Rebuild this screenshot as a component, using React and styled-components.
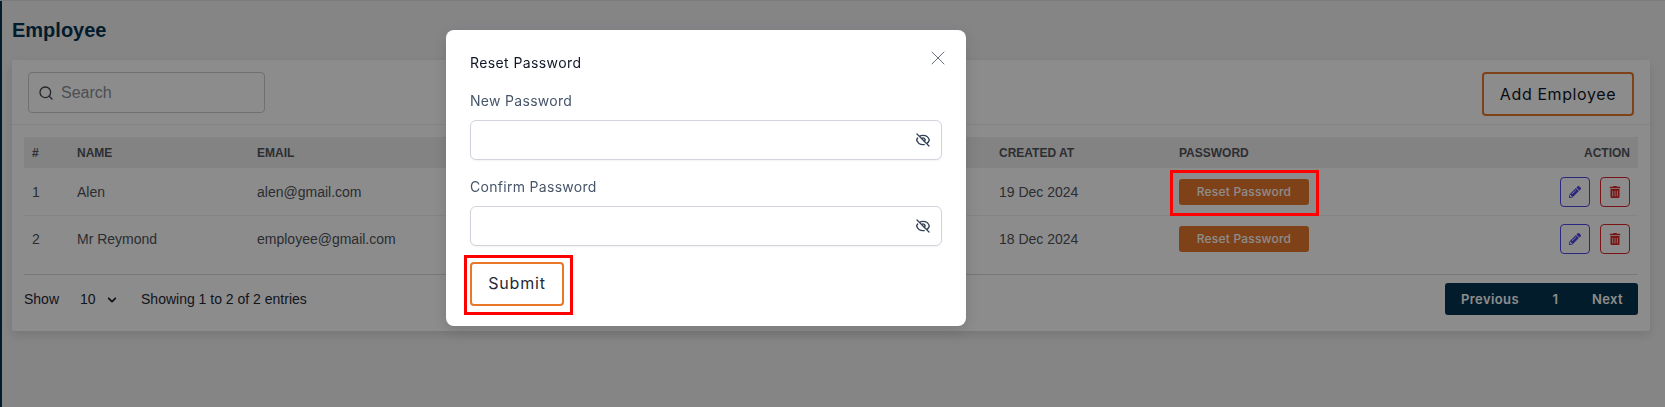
import styled, { createGlobalStyle } from "styled-components";
import { FaPencilAlt, FaTrashAlt, FaChevronDown } from "react-icons/fa";
import { HiOutlineEyeOff } from "react-icons/hi";
import { FiSearch } from "react-icons/fi";
import { X } from "lucide-react";

const NAVY = "#04344f";
const ORANGE = "#e8772a";
const UI_FONT = `Inter, "Noto Sans", sans-serif`;

const GlobalStyle = createGlobalStyle`
    html, body {
        margin: 0;
        height: 100%;
        overflow: hidden;
        background: #f3f3f5;
        font-family: "Liberation Sans", Arial, sans-serif;
    }
    * { box-sizing: border-box; }
`;

const Page = styled.div`
    display: flex;
    height: 407px;
    border-top: 1px solid #dfe0e2;
`;

const SideEdge = styled.div`
    width: 2px;
    background: ${NAVY};
`;

const Main = styled.main`
    flex: 1;
    padding: 19px 15px 0 10px;
`;

const Title = styled.h1`
    margin: 0 0 20px;
    font-size: 20px;
    line-height: 20px;
    font-weight: 700;
    color: ${NAVY};
`;

const Card = styled.section`
    background: #fff;
    box-shadow: 0 4px 12px rgba(0, 0, 0, 0.12);
    border-radius: 2px;
`;

const Toolbar = styled.div`
    display: flex;
    justify-content: space-between;
    align-items: flex-start;
    padding: 12px 16px 8px;
    border-bottom: 1px solid #eeeff1;
`;

const SearchBox = styled.label`
    display: flex;
    align-items: center;
    gap: 5px;
    width: 237px;
    height: 41px;
    padding: 0 9px;
    border: 1px solid #c9ccd1;
    border-radius: 4px;
    color: #3f4650;
`;

const SearchInput = styled.input`
    flex: 1;
    min-width: 0;
    border: 0;
    outline: 0;
    background: transparent;
    font: 16px "Liberation Sans", Arial, sans-serif;
    &::placeholder { color: #8a8f98; }
`;

const AddButton = styled.button`
    width: 152px;
    height: 44px;
    border: 2px solid ${ORANGE};
    border-radius: 4px;
    background: #fff;
    color: #111827;
    font: 400 16px ${UI_FONT};
    letter-spacing: 0.6px;
`;

const TableArea = styled.div`
    padding: 12px 12px 0;
`;

const Row = styled.div`
    display: grid;
    grid-template-columns: 45px 180px 742px 180px 1fr 170px;
    align-items: center;
    height: ${({ $head, $last }) => ($head ? "31px" : $last ? "46px" : "48px")};
    background: ${({ $head }) => ($head ? "#eeeeef" : "transparent")};
    border-bottom: ${({ $last, $head }) => ($last || $head ? "0" : "1px solid #f0f1f3")};
`;

const HeadCell = styled.div`
    padding: 0 8px;
    font-size: 12px;
    font-weight: 700;
    color: #52555c;
    text-align: ${({ $right }) => ($right ? "right" : "left")};
`;

const Cell = styled.div`
    padding: 0 8px;
    font-size: 14px;
    color: #50525a;
`;

const Actions = styled.div`
    display: flex;
    justify-content: flex-end;
    gap: 10px;
    padding-right: 8px;
`;

const IconButton = styled.button`
    display: flex;
    align-items: center;
    justify-content: center;
    width: 30px;
    height: 30px;
    padding: 0;
    border: 1px solid ${({ $color }) => $color};
    border-radius: 4px;
    background: #fff;
    color: ${({ $color }) => $color};
    font-size: 12px;
`;

const Marked = styled.div`
    position: relative;
    width: fit-content;
    &::after {
        content: "";
        position: absolute;
        z-index: 30;
        top: ${({ $top }) => $top}px;
        right: ${({ $right }) => $right}px;
        bottom: ${({ $bottom }) => $bottom}px;
        left: ${({ $left }) => $left}px;
        border: 3px solid #ff0000;
        pointer-events: none;
    }
`;

const ResetButton = styled.button`
    display: block;
    width: 130px;
    height: 26px;
    padding: 0 0 1px;
    border: 0;
    border-radius: 3px;
    background: ${ORANGE};
    color: #fff;
    font: 500 12px ${UI_FONT};
    letter-spacing: 0.2px;
`;

const Footer = styled.div`
    display: flex;
    align-items: center;
    justify-content: space-between;
    margin-top: 12px;
    padding: 8px 0 16px;
    border-top: 1px solid #d8dadd;
`;

const Entries = styled.div`
    display: flex;
    align-items: center;
    font-size: 14px;
    color: #1f2937;
`;

const SelectWrap = styled.div`
    position: relative;
    width: 61px;
    margin-left: 21px;
    color: #111827;
    svg {
        position: absolute;
        right: 24px;
        top: 4px;
        pointer-events: none;
    }
`;

const Select = styled.select`
    appearance: none;
    width: 100%;
    padding: 0;
    border: 0;
    background: transparent;
    font: 14px "Liberation Sans", Arial, sans-serif;
    color: #1f2937;
`;

const Pagination = styled.nav`
    display: flex;
    align-items: center;
    width: 193px;
    height: 32px;
    padding: 0 15px 0 16px;
    justify-content: space-between;
    border-radius: 3px;
    background: ${NAVY};
    color: #fff;
    font: 600 13px ${UI_FONT};
    letter-spacing: 0.4px;
`;

const Overlay = styled.div`
    position: fixed;
    inset: 0;
    z-index: 10;
    padding: 30px 0 0 446px;
    background: rgba(0, 0, 0, 0.45);
`;

const Modal = styled.form`
    position: relative;
    width: 520px;
    height: 296px;
    padding: 23px 24px 20px;
    border-radius: 8px;
    background: #fff;
    box-shadow: 0 4px 16px rgba(0, 0, 0, 0.15);
    font-family: ${UI_FONT};
`;

const ModalTitle = styled.h2`
    margin: 0;
    font-size: 14px;
    line-height: 20px;
    font-weight: 400;
    letter-spacing: 0.4px;
    color: #111827;
`;

const CloseButton = styled.button`
    position: absolute;
    top: 16px;
    right: 16px;
    display: flex;
    padding: 0;
    border: 0;
    background: none;
    color: #6b7280;
`;

const Field = styled.div`
    margin-top: ${({ $first }) => ($first ? "18px" : "17px")};
`;

const Label = styled.label`
    display: block;
    margin-bottom: 9px;
    font-size: 14px;
    line-height: 20px;
    letter-spacing: 0.3px;
    color: #475569;
`;

const InputWrap = styled.div`
    position: relative;
    svg {
        position: absolute;
        top: 12px;
        right: 11px;
        color: #334155;
    }
`;

const PasswordInput = styled.input`
    display: block;
    width: 100%;
    height: 40px;
    padding: 0 36px 0 12px;
    border: 1px solid #d1d5db;
    border-radius: 6px;
    outline: 0;
    box-shadow: 0 1px 2px rgba(0, 0, 0, 0.05);
`;

const SubmitButton = styled.button`
    display: block;
    width: 94px;
    height: 44px;
    padding: 0 0 2px;
    border: 2px solid ${ORANGE};
    border-radius: 4px;
    background: #fff;
    color: #1f2937;
    font: 400 16px ${UI_FONT};
    letter-spacing: 0.8px;
`;

const SubmitRow = styled.div`
    margin-top: 16px;
`;

const employees = [
    { id: 1, name: "Alen", email: "alen@gmail.com", created: "19 Dec 2024", marked: true },
    { id: 2, name: "Mr Reymond", email: "employee@gmail.com", created: "18 Dec 2024" },
];

function ResetCell({ marked }) {
    if (!marked) return <ResetButton>Reset Password</ResetButton>;
    return (
        <Marked $top={-9} $right={-10} $bottom={-11} $left={-9}>
            <ResetButton>Reset Password</ResetButton>
        </Marked>
    );
}

function PasswordField({ first, label }) {
    return (
        <Field $first={first}>
            <Label>{label}</Label>
            <InputWrap>
                <PasswordInput type="password" />
                <HiOutlineEyeOff size={16} />
            </InputWrap>
        </Field>
    );
}

export default function App() {
    return (
        <>
            <GlobalStyle />
            <Page>
                <SideEdge />
                <Main>
                    <Title>Employee</Title>
                    <Card>
                        <Toolbar>
                            <SearchBox>
                                <FiSearch size={16} />
                                <SearchInput placeholder="Search" />
                            </SearchBox>
                            <AddButton>Add Employee</AddButton>
                        </Toolbar>
                        <TableArea>
                            <Row $head>
                                <HeadCell>#</HeadCell>
                                <HeadCell>NAME</HeadCell>
                                <HeadCell>EMAIL</HeadCell>
                                <HeadCell>CREATED AT</HeadCell>
                                <HeadCell>PASSWORD</HeadCell>
                                <HeadCell $right>ACTION</HeadCell>
                            </Row>
                            {employees.map((emp, i) => (
                                <Row key={emp.id} $last={i === employees.length - 1}>
                                    <Cell>{emp.id}</Cell>
                                    <Cell>{emp.name}</Cell>
                                    <Cell>{emp.email}</Cell>
                                    <Cell>{emp.created}</Cell>
                                    <Cell>
                                        <ResetCell marked={emp.marked} />
                                    </Cell>
                                    <Actions>
                                        <IconButton $color="#4f46e5"><FaPencilAlt /></IconButton>
                                        <IconButton $color="#dc2626"><FaTrashAlt /></IconButton>
                                    </Actions>
                                </Row>
                            ))}
                            <Footer>
                                <Entries>
                                    Show
                                    <SelectWrap>
                                        <Select defaultValue="10">
                                            <option>10</option>
                                            <option>25</option>
                                            <option>50</option>
                                        </Select>
                                        <FaChevronDown size={10} />
                                    </SelectWrap>
                                    Showing 1 to 2 of 2 entries
                                </Entries>
                                <Pagination>
                                    <span>Previous</span>
                                    <span>1</span>
                                    <span>Next</span>
                                </Pagination>
                            </Footer>
                        </TableArea>
                    </Card>
                </Main>
            </Page>
            <Overlay>
                <Modal onSubmit={(e) => e.preventDefault()}>
                    <ModalTitle>Reset Password</ModalTitle>
                    <CloseButton type="button"><X size={24} strokeWidth={1} /></CloseButton>
                    <PasswordField first label="New Password" />
                    <PasswordField label="Confirm Password" />
                    <SubmitRow>
                        <Marked $top={-7} $right={-9} $bottom={-9} $left={-6}>
                            <SubmitButton>Submit</SubmitButton>
                        </Marked>
                    </SubmitRow>
                </Modal>
            </Overlay>
        </>
    );
}
